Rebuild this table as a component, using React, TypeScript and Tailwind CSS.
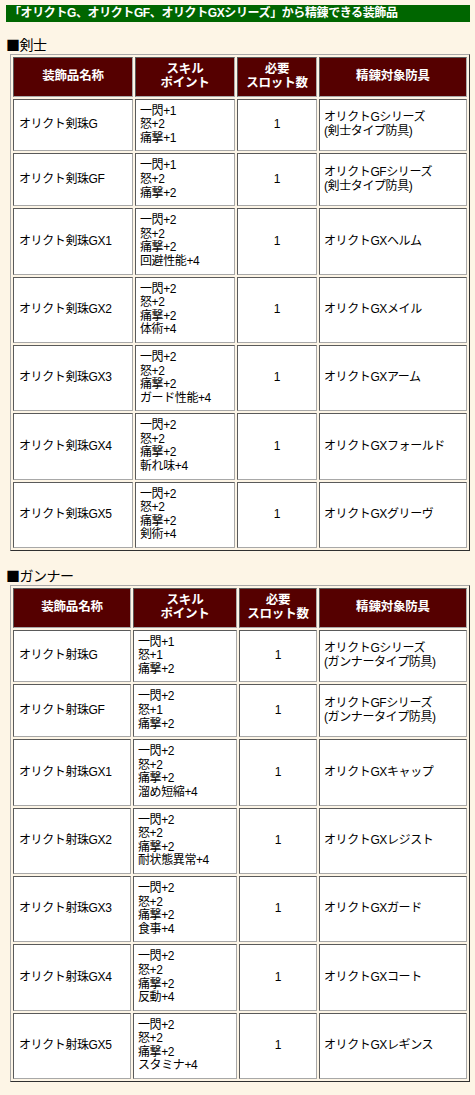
// 「オリクトG、GF、GXシリーズ」から精錬できる装飾品 — 剣士 / ガンナー
const FONT = '"Liberation Sans", "Noto Sans CJK JP", sans-serif';

type Row = { name: string; skills: string[]; slots: number; armor: string[] };

const KENSHI: Row[] = [
  { name: 'オリクト剣珠G', skills: ['一閃+1', '怒+2', '痛撃+1'], slots: 1, armor: ['オリクトGシリーズ', '(剣士タイプ防具)'] },
  { name: 'オリクト剣珠GF', skills: ['一閃+1', '怒+2', '痛撃+2'], slots: 1, armor: ['オリクトGFシリーズ', '(剣士タイプ防具)'] },
  { name: 'オリクト剣珠GX1', skills: ['一閃+2', '怒+2', '痛撃+2', '回避性能+4'], slots: 1, armor: ['オリクトGXヘルム'] },
  { name: 'オリクト剣珠GX2', skills: ['一閃+2', '怒+2', '痛撃+2', '体術+4'], slots: 1, armor: ['オリクトGXメイル'] },
  { name: 'オリクト剣珠GX3', skills: ['一閃+2', '怒+2', '痛撃+2', 'ガード性能+4'], slots: 1, armor: ['オリクトGXアーム'] },
  { name: 'オリクト剣珠GX4', skills: ['一閃+2', '怒+2', '痛撃+2', '斬れ味+4'], slots: 1, armor: ['オリクトGXフォールド'] },
  { name: 'オリクト剣珠GX5', skills: ['一閃+2', '怒+2', '痛撃+2', '剣術+4'], slots: 1, armor: ['オリクトGXグリーヴ'] },
];

const GUNNER: Row[] = [
  { name: 'オリクト射珠G', skills: ['一閃+1', '怒+1', '痛撃+2'], slots: 1, armor: ['オリクトGシリーズ', '(ガンナータイプ防具)'] },
  { name: 'オリクト射珠GF', skills: ['一閃+2', '怒+1', '痛撃+2'], slots: 1, armor: ['オリクトGFシリーズ', '(ガンナータイプ防具)'] },
  { name: 'オリクト射珠GX1', skills: ['一閃+2', '怒+2', '痛撃+2', '溜め短縮+4'], slots: 1, armor: ['オリクトGXキャップ'] },
  { name: 'オリクト射珠GX2', skills: ['一閃+2', '怒+2', '痛撃+2', '耐状態異常+4'], slots: 1, armor: ['オリクトGXレジスト'] },
  { name: 'オリクト射珠GX3', skills: ['一閃+2', '怒+2', '痛撃+2', '食事+4'], slots: 1, armor: ['オリクトGXガード'] },
  { name: 'オリクト射珠GX4', skills: ['一閃+2', '怒+2', '痛撃+2', '反動+4'], slots: 1, armor: ['オリクトGXコート'] },
  { name: 'オリクト射珠GX5', skills: ['一閃+2', '怒+2', '痛撃+2', 'スタミナ+4'], slots: 1, armor: ['オリクトGXレギンス'] },
];

const cell =
  'border border-t-[#5a5a5a] border-l-[#5a5a5a] border-b-[#a8a8a8] border-r-[#a8a8a8] px-[4px] py-[5px] align-middle';

function Lines({ items }: { items: string[] }) {
  return (
    <>
      {items.map((t, i) => (
        <div key={i}>{t}</div>
      ))}
    </>
  );
}

function GearTable({ rows, widths }: { rows: Row[]; widths: [string, string, string, string] }) {
  return (
    <table className="w-[460px] table-fixed border-separate border-spacing-[2px] border border-t-[#a8a8a8] border-l-[#a8a8a8] border-b-[#303030] border-r-[#303030] text-[12px] leading-[13.6px] tracking-[-0.4px] text-black">
      <colgroup>
        {widths.map((w, i) => (
          <col key={i} className={w} />
        ))}
      </colgroup>
      <thead>
        <tr className="bg-[#550000] text-white font-bold text-[12.5px] leading-[13.8px] tracking-[-0.2px]">
          <th className={`${cell} text-center`}>装飾品名称</th>
          <th className={`${cell} text-center`}>
            <div>スキル</div>
            <div>ポイント</div>
          </th>
          <th className={`${cell} text-center`}>
            <div>必要</div>
            <div>スロット数</div>
          </th>
          <th className={`${cell} text-center`}>精錬対象防具</th>
        </tr>
      </thead>
      <tbody>
        {rows.map((r) => (
          <tr key={r.name} className="bg-white">
            <td className={`${cell} pl-[5px]`}>{r.name}</td>
            <td className={cell}>
              <Lines items={r.skills} />
            </td>
            <td className={`${cell} text-center`}>{r.slots}</td>
            <td className={cell}>
              <Lines items={r.armor} />
            </td>
          </tr>
        ))}
      </tbody>
    </table>
  );
}

function SectionTitle({ label }: { label: string }) {
  return (
    <div className="h-[16px] text-[14px] leading-[16px] text-black font-['Noto_Sans_CJK_JP',sans-serif] tracking-[-0.5px]">
      ■{label}
    </div>
  );
}

export default function App() {
  return (
    <div className="min-h-[1095px] w-[475px] bg-[#fdf5e6] pt-[5px] pl-[6px]" style={{ fontFamily: FONT }}>
      <div className="w-[464px] h-[17px] bg-[#006600] pl-[3px] text-white font-bold text-[12px] leading-[17px] tracking-[-0.4px]">
        「オリクトG、オリクトGF、オリクトGXシリーズ」から精錬できる装飾品
      </div>

      <div className="mt-[14px]">
        <SectionTitle label="剣士" />
      </div>
      <div className="mt-[2px] pl-[4px]">
        <GearTable rows={KENSHI} widths={['w-[120px]', 'w-[100px]', 'w-[80px]', 'w-[148px]']} />
      </div>

      <div className="mt-[16px]">
        <SectionTitle label="ガンナー" />
      </div>
      <div className="mt-[2px] pl-[4px]">
        <GearTable rows={GUNNER} widths={['w-[118px]', 'w-[104px]', 'w-[78px]', 'w-[148px]']} />
      </div>
    </div>
  );
}
